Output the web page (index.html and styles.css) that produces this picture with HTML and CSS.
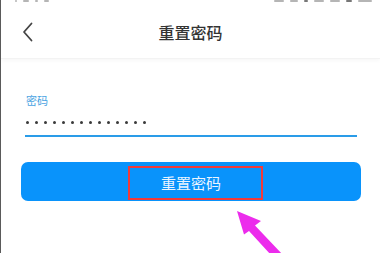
FILE: index.html
```html
<!DOCTYPE html>
<html lang="zh">
<head>
<meta charset="utf-8">
<link rel="stylesheet" href="styles.css">
</head>
<body>
<div class="page">
  <div class="status">
    <div class="status-group">
      <span class="frag w2"></span><span class="frag w6"></span><span class="frag w3"></span><span class="frag w5"></span>
    </div>
    <div class="status-group">
      <span class="frag w10"></span><span class="frag w8"></span><span class="frag w4 dark"></span><span class="frag w10"></span><span class="frag w10"></span><span class="frag w6 dark"></span><span class="frag w14"></span>
    </div>
  </div>
  <header class="nav">
    <span class="back">
      <svg width="12" height="20" viewBox="0 0 12 20"><path d="M9.5 1.5 L2 10 L9.5 18.5" fill="none" stroke="#444" stroke-width="1.8" stroke-linecap="round" stroke-linejoin="round"/></svg>
    </span>
    <h1 class="title">重置密码</h1>
    <span class="nav-side"></span>
  </header>
  <main class="form">
    <label class="label">密码</label>
    <div class="field">
      <span class="dot"></span><span class="dot"></span><span class="dot"></span><span class="dot"></span><span class="dot"></span><span class="dot"></span><span class="dot"></span><span class="dot"></span><span class="dot"></span><span class="dot"></span><span class="dot"></span><span class="dot"></span><span class="dot"></span><span class="dot"></span>
    </div>
  </main>
  <div class="actions">
    <button class="btn"><span class="btn-text">重置密码</span></button>
  </div>
  <svg class="arrow" width="380" height="253" viewBox="0 0 380 253">
    <polygon points="237,211 261,221 255,225.5 283,255 276.5,261 249,231 244,234.5" fill="#ec2cec"/>
  </svg>
</div>
</body>
</html>
```
FILE: styles.css
```css
html, body {
  margin: 0;
  padding: 0;
  background: #fff;
}
body {
  font-family: "Noto Sans CJK SC", "Noto Sans", sans-serif;
}
.page {
  position: relative;
  width: 380px;
  height: 253px;
  overflow: hidden;
  box-sizing: border-box;
  border-left: 1px solid #5a5a5a;
  background: #fff;
}
.status {
  height: 5px;
  display: flex;
  justify-content: space-between;
  align-items: flex-start;
  padding: 0 8px 0 14px;
}
.status-group {
  display: flex;
  gap: 6px;
}
.frag {
  display: block;
  height: 2px;
  background: #b5b5b5;
  border-radius: 1px;
}
.frag.dark { background: #777; }
.w2 { width: 2px; }
.w3 { width: 3px; }
.w4 { width: 4px; }
.w5 { width: 5px; }
.w6 { width: 6px; }
.w8 { width: 8px; }
.w10 { width: 10px; }
.w14 { width: 14px; }
.nav {
  height: 53px;
  display: grid;
  grid-template-columns: 44px 1fr 44px;
  align-items: center;
  border-bottom: 1px solid #f3f3f3;
  box-shadow: 0 2px 4px rgba(0,0,0,0.03);
}
.back {
  display: flex;
  align-items: center;
  padding-left: 21px;
}
.title {
  margin: 0;
  text-align: center;
  font-size: 16px;
  font-weight: 500;
  color: #333;
  line-height: 20px;
}
.form {
  padding: 0 23px 0 24px;
}
.label {
  display: block;
  margin-top: 35px;
  font-size: 11px;
  line-height: 12px;
  color: #4aa3e2;
  padding-left: 1px;
}
.field {
  margin-top: 8px;
  padding: 7px 0 11px 1px;
  display: flex;
  gap: 6px;
  border-bottom: 2px solid #2a9ce8;
}
.dot {
  width: 3px;
  height: 3px;
  border-radius: 50%;
  background: #3a3a3a;
}
.actions {
  padding: 25px 19px 0 20px;
}
.btn {
  width: 100%;
  height: 39px;
  border: none;
  border-radius: 7px;
  background: #0993fb;
  display: flex;
  align-items: flex-end;
  justify-content: flex-start;
  padding: 0 0 1px 107px;
  box-sizing: border-box;
  font-family: inherit;
}
.btn-text {
  display: block;
  border: 2px solid #f23a3a;
  padding: 0 40px 0 31px;
  line-height: 30px;
  font-size: 15px;
  color: #e9f4ff;
}
.arrow {
  position: absolute;
  left: -1px;
  top: 0;
  pointer-events: none;
}
```
